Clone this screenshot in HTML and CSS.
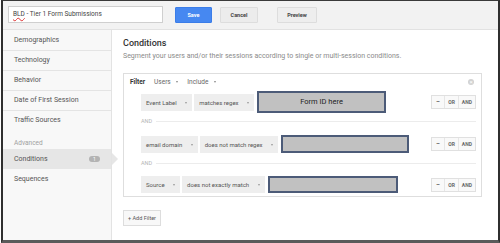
FILE: index.html
```html
<!DOCTYPE html>
<html lang="en">
<head>
    <meta charset="UTF-8">
    <title>Segment editor</title>
    <link rel="stylesheet" href="styles.css">
</head>
<body>
<div class="frame">
    <header class="topbar">
        <div class="name-input"><span class="typo">BLD</span> - Tier 1 Form Submissions</div>
        <button class="btn btn-save">Save</button>
        <button class="btn btn-cancel">Cancel</button>
        <button class="btn btn-preview">Preview</button>
    </header>
    <div class="editor">
        <aside class="sidebar">
            <div class="nav-item">Demographics</div>
            <div class="nav-item">Technology</div>
            <div class="nav-item">Behavior</div>
            <div class="nav-item">Date of First Session</div>
            <div class="nav-item nav-last">Traffic Sources</div>
            <div class="nav-label">Advanced</div>
            <div class="nav-item nav-active">Conditions <span class="badge">1</span></div>
            <div class="nav-item nav-last">Sequences</div>
        </aside>
        <main class="content">
            <h2 class="title">Conditions</h2>
            <p class="subtitle">Segment your users and/or their sessions according to single or multi-session conditions.</p>

            <div class="filter">
                <div class="filter-head">
                    <b>Filter</b>
                    <span class="plain">Users <i class="caret"></i></span>
                    <span class="plain">Include <i class="caret"></i></span>
                    <span class="remove">&times;</span>
                </div>

                <div class="row row-first">
                    <span class="select">Event Label <i class="caret"></i></span>
                    <span class="select">matches regex <i class="caret"></i></span>
                    <div class="value value-big">Form ID here</div>
                    <div class="ops"><span>&minus;</span><span>OR</span><span>AND</span></div>
                </div>

                <div class="sep sep-first"><span>AND</span></div>

                <div class="row row-second">
                    <span class="select">email domain <i class="caret"></i></span>
                    <span class="select">does not match regex <i class="caret"></i></span>
                    <div class="value value-two"></div>
                    <div class="ops"><span>&minus;</span><span>OR</span><span>AND</span></div>
                </div>

                <div class="sep"><span>AND</span></div>

                <div class="row row-third">
                    <span class="select">Source <i class="caret"></i></span>
                    <span class="select">does not exactly match <i class="caret"></i></span>
                    <div class="value value-three"></div>
                    <div class="ops"><span>&minus;</span><span>OR</span><span>AND</span></div>
                </div>
            </div>

            <button class="add-filter">+ Add Filter</button>
        </main>
    </div>
</div>
</body>
</html>
```

FILE: styles.css
```css
body {
    margin: 0;
    padding: 0;
    background: #fff;
    font-family: Roboto, 'Liberation Sans', sans-serif;
    color: #555;
}
.frame {
    margin-left: 1px;
    width: 499px;
    height: 243px;
    box-sizing: border-box;
    border-top: 1px solid #3a3a3a;
    border-left: 2px solid #2f2f2f;
    border-right: 2px solid #2f2f2f;
    border-bottom: 3px solid #5a5a5a;
    display: flex;
    flex-direction: column;
    overflow: hidden;
}

/* top bar */
.topbar {
    height: 29px;
    box-sizing: border-box;
    background: #f2f2f2;
    border-bottom: 1px solid #e2e2e2;
    display: flex;
    align-items: center;
    padding: 0 0 1px 5px;
}
.name-input {
    width: 155px;
    height: 17px;
    box-sizing: border-box;
    background: #fff;
    border: 1px solid #cfcfcf;
    font-size: 6.5px;
    line-height: 15px;
    padding-left: 4px;
    color: #444;
}
.typo {
    text-decoration: underline wavy #d33;
    text-decoration-thickness: 0.5px;
}
.btn {
    height: 16px;
    border: 1px solid #ddd;
    background: #ececec;
    color: #444;
    font-family: Roboto, 'Liberation Sans', sans-serif;
    font-size: 5.5px;
    font-weight: bold;
    padding: 0;
    border-radius: 1px;
}
.btn-save {
    margin-left: 12px;
    width: 37px;
    background: #4688f1;
    border-color: #3b7de8;
    color: #fff;
}
.btn-cancel {
    margin-left: 8px;
    width: 38px;
}
.btn-preview {
    margin-left: 19px;
    width: 40px;
    background: #eeeeee;
}

/* body */
.editor {
    flex: 1;
    display: flex;
}
.sidebar {
    width: 108px;
    padding-top: 1px;
    background: #f8f8f8;
    border-right: 1px solid #e3e3e3;
    font-size: 7px;
    color: #555;
}
.nav-item {
    position: relative;
    height: 19px;
    line-height: 19px;
    padding-left: 11px;
    border-bottom: 1px solid #e4e4e4;
}
.nav-last {
    border-bottom: none;
}
.nav-label {
    margin-top: 8px;
    height: 11px;
    line-height: 11px;
    padding-left: 11px;
    font-size: 6.5px;
    color: #a0a0a0;
}
.nav-active {
    height: 20px;
    line-height: 20px;
    border-bottom: none;
    background: #e6e6e6;
}
.nav-active::after {
    content: '';
    position: absolute;
    right: -7px;
    top: 4px;
    border-top: 6px solid transparent;
    border-bottom: 6px solid transparent;
    border-left: 6px solid #e6e6e6;
}
.nav-active + .nav-item {
    margin-top: 1px;
}
.badge {
    position: absolute;
    left: 86px;
    top: 7px;
    width: 11px;
    height: 6px;
    border-radius: 3px;
    background: #b3b3b3;
    color: #fff;
    font-size: 5px;
    line-height: 6px;
    text-align: center;
}

/* main panel */
.content {
    flex: 1;
    padding: 7px 0 0 11px;
}
.title {
    margin: 0;
    font-size: 9px;
    line-height: 12px;
    font-weight: 500;
    color: #333;
}
.subtitle {
    margin: 2px 0 0;
    font-size: 7px;
    line-height: 10px;
    color: #8a8a8a;
}
.filter {
    margin-top: 12px;
    width: 359px;
    box-sizing: border-box;
    border: 1px solid #dedede;
    padding: 0 5px 3px 17px;
}
.filter-head {
    position: relative;
    margin: 2px 0 0 -11px;
    height: 12px;
    display: flex;
    align-items: center;
    gap: 9px;
    font-size: 6.5px;
}
.filter-head b {
    color: #333;
}
.plain {
    color: #666;
}
.caret {
    display: inline-block;
    margin-left: 4px;
    vertical-align: middle;
    border-left: 1.5px solid transparent;
    border-right: 1.5px solid transparent;
    border-top: 2px solid #888;
}
.remove {
    position: absolute;
    right: 2px;
    top: 3px;
    width: 6px;
    height: 6px;
    border-radius: 50%;
    background: #d2d2d2;
    color: #fff;
    font-size: 6px;
    line-height: 6px;
    text-align: center;
}
.row {
    display: flex;
    align-items: center;
}
.row-first {
    margin-top: 3px;
    height: 22px;
}
.row-second {
    margin-top: 9px;
    height: 18px;
}
.row-third {
    margin-top: 8px;
    height: 17px;
}
.select {
    height: 17px;
    line-height: 17px;
    padding: 0 5px;
    margin-right: 2px;
    background: #eeeeee;
    font-size: 6px;
    color: #555;
}
.select .caret {
    margin-left: 7px;
    border-top-color: #999;
}
.value {
    margin-left: 1px;
    width: 129px;
    box-sizing: border-box;
    background: #c1c1c1;
    border: 2px solid #4c5b78;
    font-size: 7.5px;
    color: #222;
    text-align: center;
}
.value-big {
    height: 22px;
    line-height: 18px;
}
.value-two {
    height: 18px;
    width: 128px;
}
.value-three {
    height: 17px;
    width: 130px;
}
.ops {
    margin-left: auto;
    display: flex;
    height: 12px;
    border: 1px solid #e0e0e0;
    background: #f9f9f9;
    font-size: 5px;
    font-weight: bold;
    color: #666;
}
.ops span {
    line-height: 12px;
    padding: 0 3px;
    border-left: 1px solid #e6e6e6;
}
.ops span:first-child {
    border-left: none;
    padding: 0 4px;
    font-size: 7px;
}
.sep {
    margin-top: 5px;
    height: 10px;
    display: flex;
    align-items: center;
    font-size: 5.5px;
    color: #b5b5b5;
}
.sep-first {
    margin-top: 3px;
}
.sep::after {
    content: '';
    flex: 1;
    margin-left: 4px;
    border-top: 1px solid #ececec;
}
.add-filter {
    margin-top: 13px;
    height: 16px;
    width: 38px;
    padding: 0;
    border: 1px solid #ddd;
    background: #f8f8f8;
    font-family: Roboto, 'Liberation Sans', sans-serif;
    font-size: 5.5px;
    color: #555;
}
```
